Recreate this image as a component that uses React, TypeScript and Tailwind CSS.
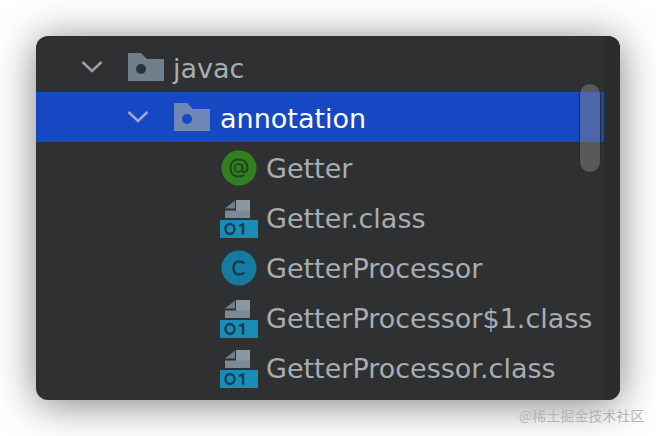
const font = { fontFamily: '"DejaVu Sans", sans-serif' };

function Chevron({ color }: { color: string }) {
  return (
    <svg width="22" height="14" viewBox="0 0 22 14" fill="none" className="shrink-0">
      <path d="M1.5 2 L11 11 L20.5 2" stroke={color} strokeWidth="2.6" />
    </svg>
  );
}

function Folder({ fill, dot }: { fill: string; dot: string }) {
  return (
    <svg width="36" height="28" viewBox="0 0 36 28" className="shrink-0">
      <path d="M0 0 H13 L19 6 H36 V28 H0 Z" fill={fill} />
      <circle cx="13" cy="16" r="5" fill={dot} />
    </svg>
  );
}

function Badge({ bg, fg, letter }: { bg: string; fg: string; letter: string }) {
  return (
    <svg width="36" height="36" viewBox="0 0 36 36" className="shrink-0">
      <circle cx="18" cy="18" r="17.5" fill={bg} />
      {letter === "@" ? (
        <g fill="none" stroke={fg} strokeWidth="2.1">
          <circle cx="17.5" cy="18" r="4" />
          <path d="M21.5 14 V20 Q21.5 22.5 24 22 Q26.5 21.5 26.5 17.5 Q26 9.5 17.5 9.5 Q9.5 9.5 9.5 18 Q9.5 26.5 17.5 26.5 Q21 26.5 23.5 25" />
        </g>
      ) : (
        <path d="M23.5 13.5 Q21.5 11.5 18.5 11.5 Q12.5 11.5 12.5 18 Q12.5 24.5 18.5 24.5 Q21.5 24.5 23.5 22.5" fill="none" stroke={fg} strokeWidth="2.4" />
      )}
    </svg>
  );
}

function ClassFile() {
  return (
    <svg width="38" height="38" viewBox="0 0 38 38" className="shrink-0">
      <path d="M5 8.5 L15 0.5 V8.5 Z" fill="#6f7f8b" />
      <path d="M16 0 H30 V11 H16 Z" fill="#8a98a3" />
      <path d="M5 10.5 H30 V18 H5 Z" fill="#7b8994" />
      <rect x="0" y="20" width="38" height="18" fill="#1a8cb5" />
      <g fill="none" stroke="#0f3f58" strokeWidth="2.4">
        <ellipse cx="10" cy="29" rx="4.6" ry="5" />
        <path d="M19 26 L23 24.5 V34.5" />
      </g>
    </svg>
  );
}

function FileRow({ icon, name, down }: { icon: React.ReactNode; name: string; down?: boolean }) {
  return (
    <div className="flex h-[50px] items-center">
      <div className={down ? "ml-[184px] mt-[4px] flex w-[38px] justify-center" : "ml-[184px] mt-[2px] flex w-[38px] justify-center"}>{icon}</div>
      <span className="ml-[8px] mt-[4px] whitespace-nowrap text-[27px] text-[#a9adb0]" style={font}>{name}</span>
    </div>
  );
}

export default function App() {
  return (
    <div className="relative h-[436px] w-[656px] overflow-hidden bg-white pl-[36px] pt-[36px]">
      <div className="relative flex h-[364px] w-[584px] overflow-hidden rounded-[12px] bg-[#2f3032] shadow-[0_4px_40px_rgba(0,0,0,0.5)]">
        <div className="w-[568px] pt-[6px]">
          <div className="flex h-[50px] items-center">
            <div className="ml-[45px] flex"><Chevron color="#9a9d9f" /></div>
            <div className="ml-[25px] flex"><Folder fill="#6f7f8b" dot="#2b3238" /></div>
            <span className="ml-[9px] mt-[4px] text-[27px] text-[#a9adb0]" style={font}>javac</span>
          </div>
          <div className="flex h-[50px] items-center bg-[#1648c4]">
            <div className="ml-[91px] flex"><Chevron color="#98a8cf" /></div>
            <div className="ml-[25px] flex"><Folder fill="#6f88b8" dot="#1648c4" /></div>
            <span className="ml-[10px] mt-[4px] text-[27px] text-white" style={font}>annotation</span>
          </div>
          <FileRow icon={<Badge bg="#34801f" fg="#1c4a1a" letter="@" />} name="Getter" />
          <FileRow icon={<ClassFile />} name="Getter.class" down />
          <FileRow icon={<Badge bg="#177ba0" fg="#0f3f58" letter="C" />} name="GetterProcessor" />
          <FileRow icon={<ClassFile />} name="GetterProcessor$1.class" down />
          <FileRow icon={<ClassFile />} name="GetterProcessor.class" down />
        </div>
        <div className="w-[16px] bg-[#2b2c2e]" />
        <div className="absolute left-[543px] top-[47px] h-[90px] w-[22px] rounded-full border border-[#2a2b2d] bg-[rgba(140,140,140,0.45)]" />
      </div>
      <span className="absolute left-[519px] top-[405px] text-[14px] text-[#b4b4b4]" style={{ fontFamily: '"Noto Sans CJK SC", sans-serif' }}>@稀土掘金技术社区</span>
    </div>
  );
}
